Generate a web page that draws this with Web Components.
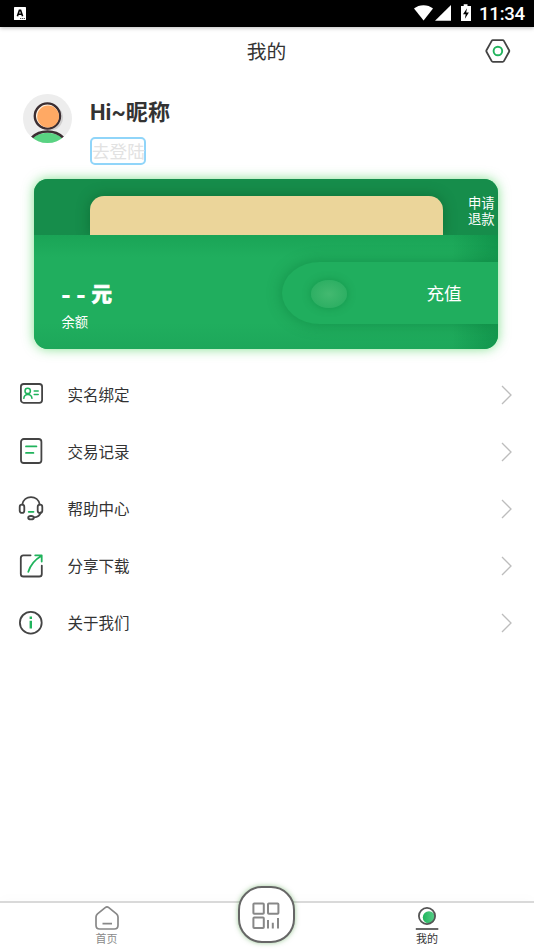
<!DOCTYPE html>
<html lang="zh-CN">
<head>
<meta charset="utf-8">
<title>我的</title>
<style>
html,body{margin:0;padding:0;background:#fff}
body{width:534px;height:950px;overflow:hidden;font-family:Roboto,"Noto Sans CJK SC",sans-serif;color:#333}
</style>
</head>
<body>
<profile-page></profile-page>
<script>
const define = (name, html) => customElements.define(name, class extends HTMLElement {
  constructor() {
    super();
    const t = document.createElement('template');
    t.innerHTML = html;
    this.attachShadow({mode: 'open'}).append(t.content.cloneNode(true));
  }
});

define('status-bar', `
<style>
:host{display:flex;height:27px;background:#000;color:#fff;justify-content:space-between;box-shadow:0 1px 4px rgba(0,0,0,.28);position:relative;flex:none}
svg{display:block}
.right{display:flex}
.time{font:500 18.6px/28px Roboto,sans-serif;width:55px;white-space:nowrap;letter-spacing:-.25px}
</style>
<svg width="40" height="27"><rect x="14" y="7" width="12" height="13" rx=".6" fill="#fff"/><path d="M17.4 16.2 19.4 10.3h1.2l2 5.9M18.4 14.3h3.2" fill="none" stroke="#000" stroke-width="1.6"/><path d="M20 18.5h5" stroke="#555" stroke-dasharray="1.3 .6"/></svg>
<div class="right">
<svg width="65" height="27" fill="#fff"><path d="M0 8.6C5 4 14 4 19 8.6L9.6 20.5Z"/><path d="M21 20.8 37 5v15.8Z"/><path d="M47 6h2.7V4.3h3.8V6H57v15H47Z"/><path d="m53 8.2-4 6h2.7l-.8 4.5 4-6.3h-2.7Z" fill="#000"/></svg>
<span class="time">11:34</span></div>`);

define('page-title', `
<style>
:host{display:grid;grid-template-columns:60px 1fr 60px;height:48px;align-items:center;flex:none}
h1{grid-column:2;margin:0;text-align:center;font:400 19.8px/28px "Noto Sans CJK SC",sans-serif;color:#333;padding-right:1px}
svg{display:block;margin-left:11px}
</style>
<h1><slot></slot></h1>
<svg width="26" height="24" fill="none"><path d="M7.9 1.2h9.8q.8 0 1.2.7l5.2 9.3q.4.8 0 1.6l-5.2 9.3q-.4.7-1.2.7H7.9q-.8 0-1.2-.7L1.5 12.8q-.4-.8 0-1.6l5.2-9.3q.4-.7 1.2-.7Z" stroke="#444" stroke-width="1.8"/><circle cx="12.9" cy="12" r="4.3" stroke="#20b35c" stroke-width="1.9"/></svg>`);

define('user-header', `
<style>
:host{display:flex;padding:19px 0 0 23px;height:85px;flex:none}
svg{display:block;width:49px;height:50px;margin-right:18px}
.name{font:700 22px/34px Roboto,"Noto Sans CJK SC",sans-serif;color:#333;height:42.5px;padding-top:2px;box-sizing:border-box;letter-spacing:.08px}
.login{box-sizing:border-box;display:inline-block;height:28px;width:56px;border:2px solid #90d5f9;border-radius:5px;font:400 17.6px/24px "Noto Sans CJK SC",sans-serif;color:#e2e2e2;white-space:nowrap}
</style>
<svg viewBox="0 0 49 50"><defs><clipPath id="c"><circle cx="24.5" cy="24.5" r="24.5"/></clipPath></defs><circle cx="24.5" cy="24.5" r="24.5" fill="#ededed"/><g clip-path="url(#c)"><circle cx="27" cy="23.6" r="13" fill="#d0cfcf"/><circle cx="24.4" cy="22" r="12.6" fill="#fff0df" stroke="#3b2e32" stroke-width="2.4"/><circle cx="25.1" cy="22.5" r="10.9" fill="#ffa964"/><path d="M5 49.5C14 35 35 35 44 49.5Z" fill="#59d382"/><path d="M8.8 43.6C17 35.5 32 35.5 40.2 43.6" fill="none" stroke="#3b2e32" stroke-width="2.6"/></g></svg>
<div><div class="name"><slot></slot></div><div class="login"><slot name="action"></slot></div></div>`);

define('balance-card', `
<style>
:host{display:flex;flex-direction:column;box-sizing:border-box;flex:none;width:464px;height:170px;margin-left:34px;border-radius:14px;background:#20ae5e;box-shadow:0 0 12px rgba(55,205,75,.62);color:#fff;font-family:"Noto Sans CJK SC",sans-serif}
.top{height:56.4px;flex:none;display:flex;background:#168d4b;border-radius:14px 14px 0 0;overflow:hidden}
.paper{width:353px;height:39.5px;flex:none;margin:17px 0 0 56px;background:#ebd59a;border-radius:14px 14px 0 0;box-shadow:0 0 14px rgba(0,60,20,.35)}
.refund{font-size:13.3px;line-height:15.5px;width:28px;margin:16px 0 0 25px}
.bottom{flex:1;display:flex;justify-content:space-between;border-radius:0 0 14px 14px;overflow:hidden;background:linear-gradient(90deg,transparent 418px,rgba(0,120,55,.38)),linear-gradient(#1aa456,#20ae5e 22px,#20ae5e 88px,#1da75a)}
.money{padding:44px 0 0 27.4px}
.amount{font-weight:900;font-size:20.5px;line-height:28px;height:30px}
.label{font-size:13.3px;line-height:26px}
.charge{display:flex;box-sizing:border-box;align-items:center;width:216px;height:62px;margin-top:26.6px;border-radius:38px 0 0 38px/31px 0 0 31px;background:#20ae5e;box-shadow:0 0 15px rgba(0,105,45,.42);padding-left:29px}
.knob{width:36px;height:28px;margin-top:2px;border-radius:50%;background:radial-gradient(#43b970,#25ab5e);box-shadow:0 0 9px rgba(0,110,45,.38)}
.charge span{font-size:17.6px;line-height:26px;margin-left:79.5px}
</style>
<div class="top"><div class="paper"></div><div class="refund"><slot name="refund"></slot></div></div>
<div class="bottom"><div class="money"><div class="amount"><slot name="amount"></slot></div><div class="label"><slot name="label"></slot></div></div>
<div class="charge"><div class="knob"></div><span><slot name="charge"></slot></span></div></div>`);

define('menu-row', `
<style>
:host{display:flex;height:57.1px;align-items:center;padding:0 21px 0 17.6px;flex:none}
.label{flex:1;margin-left:24px;font:400 15.5px/24px "Noto Sans CJK SC",sans-serif;color:#333;padding-bottom:1px}
svg,::slotted(svg){display:block}
::slotted(svg){margin-top:-.4px}
</style>
<slot name="icon"></slot><div class="label"><slot></slot></div>
<svg width="13" height="22" fill="none"><path d="m2 2 9 9-9 9" stroke="#bdbdbd" stroke-width="1.3"/></svg>`);

define('tab-item', `
<style>
:host{display:flex;flex-direction:column;align-items:center;width:60px;padding-top:2px;font:400 11px/16px "Noto Sans CJK SC",sans-serif}
::slotted(svg){display:block}
.t{margin-top:-1px}
</style>
<slot name="icon"></slot><div class="t"><slot></slot></div>`);

define('tab-bar', `
<style>
:host{display:flex;box-sizing:border-box;height:49px;border-top:2px solid #d9d9d9;background:#fff;margin-top:auto;padding:0 77px 0 76.5px;justify-content:space-between;flex:none;position:relative;box-shadow:0 -3px 12px rgba(0,0,0,.015)}
.scan{box-sizing:border-box;width:57px;height:57px;margin:-17px 1px 0 0;border:2px solid #666;border-radius:24px;background:#fff;box-shadow:0 0 5px rgba(60,150,50,.5);display:grid;place-items:center}
.scan svg{margin-top:2px}
.home{color:#8a8a8a}
.mine{color:#333}
</style>
<tab-item class="home"><svg slot="icon" width="26" height="26" fill="none" stroke="#888" stroke-width="1.7" stroke-linejoin="round"><path d="M2 12.1c0-1.4.5-2.3 1.5-3.2L11.2 2.6q1.8-1.3 3.6 0l7.7 6.3c1 .9 1.5 1.8 1.5 3.2v8.2q0 3.7-3.7 3.7H5.7Q2 24 2 20.3ZM8.5 18.6h9.5"/></svg>首页</tab-item>
<div class="scan"><svg width="28" height="28" fill="none" stroke="#888" stroke-width="2"><rect x="1.4" y="1.4" width="10.4" height="10.4" rx=".8"/><rect x="16" y="1.4" width="10.4" height="10.4" rx=".8"/><rect x="1.4" y="15.6" width="10.4" height="10.4" rx=".8"/><path d="M16 18v8.5M20.8 20.7v5.8M26 16v10.5"/></svg></div>
<tab-item class="mine"><svg slot="icon" width="26" height="26" fill="none"><defs><linearGradient id="g"><stop stop-color="#20b55c"/><stop offset="1" stop-color="#5ccf8b"/></linearGradient></defs><circle cx="15" cy="12.4" r="6.2" fill="url(#g)"/><circle cx="13" cy="11" r="8.1" stroke="#555" stroke-width="1.8"/><path d="M1.8 24h22.5" stroke="#444" stroke-width="1.6"/></svg>我的</tab-item>`);

define('profile-page', `
<style>
:host{display:flex;flex-direction:column;width:534px;height:950px;overflow:hidden;background:#fff}
.menu{margin-top:17px}
.amount{display:flex;align-items:center;white-space:nowrap}
.amount span{display:inline-block}
.minus{width:15px;transform:scale(1.25,1.15);transform-origin:left}
.unit{-webkit-text-stroke:.6px #fff}
svg{fill:none;stroke:#444;stroke-width:1.8;stroke-linecap:round;stroke-linejoin:round}
.g{stroke:#20b35c}
</style>
<status-bar></status-bar>
<page-title>我的</page-title>
<user-header>Hi~昵称<span slot="action">去登陆</span></user-header>
<balance-card><span slot="refund">申请退款</span><span slot="amount" class="amount"><span class="minus">-</span><span class="minus">-</span><span class="unit">元</span></span><span slot="label">余额</span><span slot="charge">充值</span></balance-card>
<div class="menu">
<menu-row><svg slot="icon" width="26" height="26"><rect x="2.9" y="3" width="21.2" height="18.8" rx="2.8"/><g class="g" stroke-width="1.5"><circle cx="9.7" cy="9.9" r="2.7"/><path d="M5.8 17.3c.6-5.2 7.5-5.2 8.2 0M16.2 10h4M16.2 13.6h4"/></g></svg>实名绑定</menu-row>
<menu-row><svg slot="icon" width="26" height="26"><rect x="3" y="1" width="20.4" height="24" rx="2.8"/><path class="g" d="M8 8.4h10.4M8 14.9h7.4"/></svg>交易记录</menu-row>
<menu-row><svg slot="icon" width="26" height="28" stroke-width="1.6"><path d="M4.3 9.7C5.7-.4 20.3-.4 21.7 9.7M22.7 17.4c-.8 3-3.3 4.7-6.8 5"/><rect x="1.7" y="9.7" width="4.6" height="8.2" rx="2.2"/><rect x="19.7" y="9.7" width="4.6" height="8.2" rx="2.2"/><ellipse cx="13" cy="22.7" rx="2.8" ry="1.7"/><path class="g" d="M10.7 16.8h4.8"/></svg>帮助中心</menu-row>
<menu-row><svg slot="icon" width="26" height="26"><path d="M12.6 2.3H5.4Q2.8 2.3 2.8 4.9v16Q2.8 23.5 5.4 23.5h15.8q2.6 0 2.6-2.6v-8.3"/><path class="g" d="M10.3 18.8C12.3 12.5 16 7.2 23.2 3M17.2 2.3h6.5v6.2"/></svg>分享下载</menu-row>
<menu-row><svg slot="icon" width="26" height="26"><circle cx="12.8" cy="12.7" r="10.9"/><path class="g" style="stroke-width:2.4;stroke-linecap:butt" d="M12.8 10.7v7.8M12.8 6.6v2.3"/></svg>关于我们</menu-row>
</div>
<tab-bar></tab-bar>`);
</script>
</body>
</html>
